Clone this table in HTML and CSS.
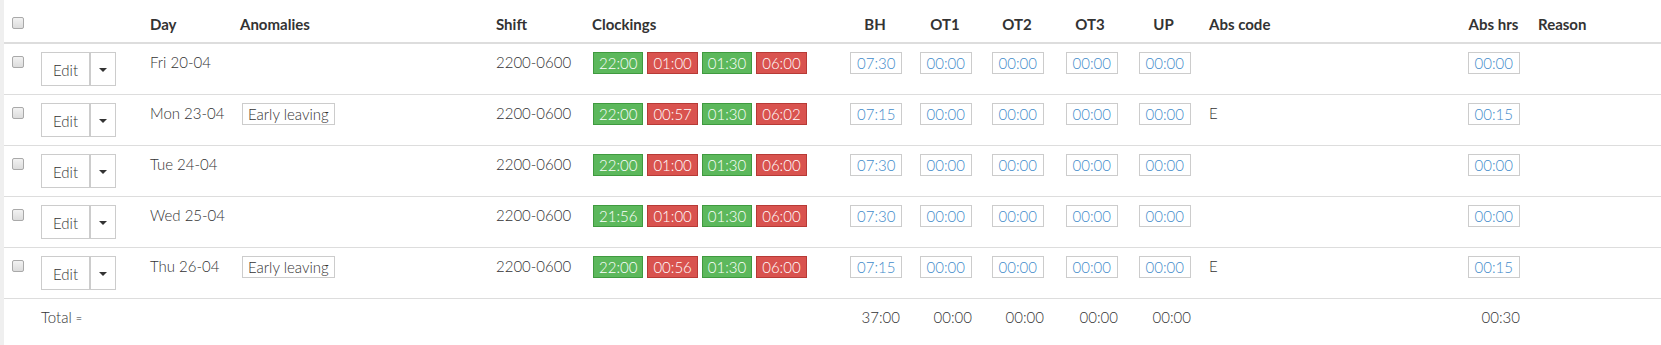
FILE: index.html
```html
<!DOCTYPE html>
<html lang="en">
<head>
<meta charset="utf-8">
<title>Clockings</title>
<link rel="stylesheet" href="styles.css">
</head>
<body>
<div class="page">
<table class="grid">
  <colgroup>
    <col class="w-check"><col class="w-edit"><col class="w-day"><col class="w-anom"><col class="w-shift"><col class="w-clock">
    <col class="w-bh"><col class="w-ot1"><col class="w-ot2"><col class="w-ot3"><col class="w-up"><col class="w-code"><col class="w-abs"><col class="w-reason">
  </colgroup>
  <thead>
    <tr>
      <th><input type="checkbox" class="chk chk-head"></th>
      <th></th>
      <th>Day</th>
      <th>Anomalies</th>
      <th>Shift</th>
      <th>Clockings</th>
      <th class="num">BH</th>
      <th class="num">OT1</th>
      <th class="num">OT2</th>
      <th class="num">OT3</th>
      <th class="num">UP</th>
      <th>Abs code</th>
      <th class="num">Abs hrs</th>
      <th>Reason</th>
    </tr>
  </thead>
  <tbody>
    <tr>
      <td><input type="checkbox" class="chk"></td>
      <td><div class="btn-group"><button class="btn">Edit</button><button class="btn btn-caret"><span class="caret"></span></button></div></td>
      <td>Fri 20-04</td>
      <td></td>
      <td>2200-0600</td>
      <td><div class="clocks"><span class="clk in">22:00</span><span class="clk out">01:00</span><span class="clk in">01:30</span><span class="clk out">06:00</span></div></td>
      <td class="num"><span class="hrs">07:30</span></td>
      <td class="num"><span class="hrs">00:00</span></td>
      <td class="num"><span class="hrs">00:00</span></td>
      <td class="num"><span class="hrs">00:00</span></td>
      <td class="num"><span class="hrs">00:00</span></td>
      <td></td>
      <td class="num"><span class="hrs">00:00</span></td>
      <td></td>
    </tr>
    <tr>
      <td><input type="checkbox" class="chk"></td>
      <td><div class="btn-group"><button class="btn">Edit</button><button class="btn btn-caret"><span class="caret"></span></button></div></td>
      <td>Mon 23-04</td>
      <td><span class="anomaly">Early leaving</span></td>
      <td>2200-0600</td>
      <td><div class="clocks"><span class="clk in">22:00</span><span class="clk out">00:57</span><span class="clk in">01:30</span><span class="clk out">06:02</span></div></td>
      <td class="num"><span class="hrs">07:15</span></td>
      <td class="num"><span class="hrs">00:00</span></td>
      <td class="num"><span class="hrs">00:00</span></td>
      <td class="num"><span class="hrs">00:00</span></td>
      <td class="num"><span class="hrs">00:00</span></td>
      <td>E</td>
      <td class="num"><span class="hrs">00:15</span></td>
      <td></td>
    </tr>
    <tr>
      <td><input type="checkbox" class="chk"></td>
      <td><div class="btn-group"><button class="btn">Edit</button><button class="btn btn-caret"><span class="caret"></span></button></div></td>
      <td>Tue 24-04</td>
      <td></td>
      <td>2200-0600</td>
      <td><div class="clocks"><span class="clk in">22:00</span><span class="clk out">01:00</span><span class="clk in">01:30</span><span class="clk out">06:00</span></div></td>
      <td class="num"><span class="hrs">07:30</span></td>
      <td class="num"><span class="hrs">00:00</span></td>
      <td class="num"><span class="hrs">00:00</span></td>
      <td class="num"><span class="hrs">00:00</span></td>
      <td class="num"><span class="hrs">00:00</span></td>
      <td></td>
      <td class="num"><span class="hrs">00:00</span></td>
      <td></td>
    </tr>
    <tr>
      <td><input type="checkbox" class="chk"></td>
      <td><div class="btn-group"><button class="btn">Edit</button><button class="btn btn-caret"><span class="caret"></span></button></div></td>
      <td>Wed 25-04</td>
      <td></td>
      <td>2200-0600</td>
      <td><div class="clocks"><span class="clk in">21:56</span><span class="clk out">01:00</span><span class="clk in">01:30</span><span class="clk out">06:00</span></div></td>
      <td class="num"><span class="hrs">07:30</span></td>
      <td class="num"><span class="hrs">00:00</span></td>
      <td class="num"><span class="hrs">00:00</span></td>
      <td class="num"><span class="hrs">00:00</span></td>
      <td class="num"><span class="hrs">00:00</span></td>
      <td></td>
      <td class="num"><span class="hrs">00:00</span></td>
      <td></td>
    </tr>
    <tr>
      <td><input type="checkbox" class="chk"></td>
      <td><div class="btn-group"><button class="btn">Edit</button><button class="btn btn-caret"><span class="caret"></span></button></div></td>
      <td>Thu 26-04</td>
      <td><span class="anomaly">Early leaving</span></td>
      <td>2200-0600</td>
      <td><div class="clocks"><span class="clk in">22:00</span><span class="clk out">00:56</span><span class="clk in">01:30</span><span class="clk out">06:00</span></div></td>
      <td class="num"><span class="hrs">07:15</span></td>
      <td class="num"><span class="hrs">00:00</span></td>
      <td class="num"><span class="hrs">00:00</span></td>
      <td class="num"><span class="hrs">00:00</span></td>
      <td class="num"><span class="hrs">00:00</span></td>
      <td>E</td>
      <td class="num"><span class="hrs">00:15</span></td>
      <td></td>
    </tr>
    <tr class="total">
      <td></td>
      <td>Total <span class="eq">=</span></td>
      <td></td>
      <td></td>
      <td></td>
      <td></td>
      <td class="num">37:00</td>
      <td class="num">00:00</td>
      <td class="num">00:00</td>
      <td class="num">00:00</td>
      <td class="num">00:00</td>
      <td></td>
      <td class="num">00:30</td>
      <td></td>
    </tr>
  </tbody>
</table>
</div>
</body>
</html>
```

FILE: styles.css
```css
html, body {
  margin: 0;
  padding: 0;
  background: #fff;
}

body {
  font-family: "Lato", "Open Sans", sans-serif;
  font-size: 15px;
  font-weight: 300;
  line-height: 20px;
  color: #333;
}

.page {
  border-left: 4px solid #efefef;
  min-height: 345px;
  box-sizing: border-box;
}

.grid {
  width: 100%;
  table-layout: fixed;
  border-collapse: collapse;
}

.w-check { width: 29px; }
.w-edit { width: 109px; }
.w-day { width: 90px; }
.w-anom { width: 256px; }
.w-shift { width: 96px; }
.w-clock { width: 258px; }
.w-bh { width: 68px; }
.w-ot1 { width: 72px; }
.w-ot2 { width: 72px; }
.w-ot3 { width: 74px; }
.w-up { width: 73px; }
.w-code { width: 258px; }
.w-abs { width: 71px; }
.w-reason { width: 131px; }

.grid th {
  padding: 14px 8px 8px 8px;
  text-align: left;
  vertical-align: top;
  font-weight: 700;
  color: #333;
  white-space: nowrap;
  border-bottom: 2px solid #ddd;
}

.grid td {
  padding: 8px;
  vertical-align: top;
  white-space: nowrap;
  border-bottom: 1px solid #ddd;
}

.grid th.num {
  text-align: center;
  padding-right: 10px;
}

.grid td.num {
  text-align: right;
  padding-right: 10px;
}

.grid tr.total td {
  border-bottom: none;
}

.chk {
  -webkit-appearance: none;
  appearance: none;
  display: block;
  width: 12px;
  height: 12px;
  margin: 4px 0 0 0;
  box-sizing: border-box;
  border: 1px solid #a9a9a9;
  border-radius: 2px;
  background: linear-gradient(#f2f2f2, #dcdcdc);
}

.chk-head {
  margin-top: 3px;
}

.btn-group {
  display: inline-flex;
}

.btn {
  display: flex;
  align-items: center;
  justify-content: center;
  box-sizing: border-box;
  height: 34px;
  width: 49px;
  padding: 2px 0 0 0;
  margin: 0;
  border: 1px solid #ccc;
  background: #fff;
  font-family: inherit;
  font-size: 15px;
  font-weight: 300;
  color: #333;
}

.btn-caret {
  width: 26px;
  padding: 2px 0 0 0;
}

.caret {
  display: block;
  width: 0;
  height: 0;
  border-top: 4px solid #333;
  border-left: 4px solid transparent;
  border-right: 4px solid transparent;
}

.anomaly {
  display: inline-block;
  margin-left: 2px;
  padding: 1px 5px;
  line-height: 18px;
  border: 1px solid #ccc;
  color: #333;
}

.clocks {
  display: flex;
  gap: 4px;
  padding-left: 1px;
}

.clk {
  display: inline-block;
  padding: 1px 5px;
  line-height: 18px;
  color: #fff;
  border: 1px solid transparent;
}

.clk.in {
  background: #5cb85c;
  border-color: #3f9a3f;
}

.clk.out {
  background: #d9534f;
  border-color: #b73a36;
}

.hrs {
  display: inline-block;
  padding: 1px 6px;
  line-height: 18px;
  border: 1px solid #ccc;
  color: #428bca;
}

.eq {
  font-size: 11px;
}
```
